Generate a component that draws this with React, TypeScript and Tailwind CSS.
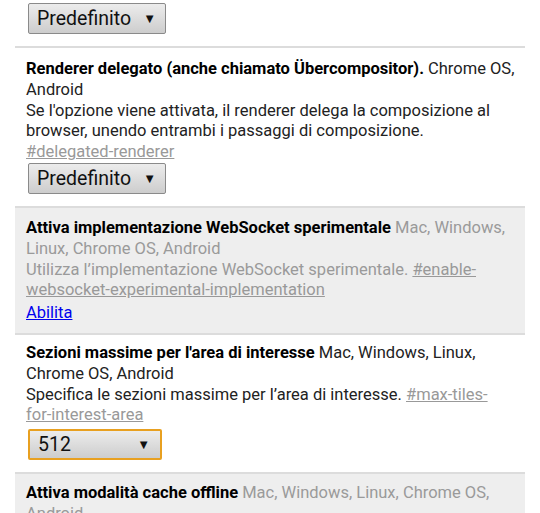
import React from 'react';

const Select = ({ value, width, focused }: { value: string; width: string; focused?: boolean }) => (
  <div
    className={`flex h-[31px] items-center justify-between rounded-[2px] bg-gradient-to-b from-[#ececec] to-[#cdcdcd] pl-[8px] text-[19.5px] leading-none text-[#111] ${width} ${
      focused ? 'border-2 border-[#e8a020] pr-[10px]' : 'border border-[#8a8a8a] pr-[9px]'
    }`}
  >
    <span>{value}</span>
    <span className="text-[13px]">▼</span>
  </div>
);

const Row: React.FC<{ gray?: boolean; className?: string; children: React.ReactNode }> = ({ gray, className, children }) => (
  <div className={`border-t-2 border-[#dcdcdc] pl-[11px] pr-[8px] ${className ?? ''} ${gray ? 'bg-[#eeeeee]' : ''}`}>
    {children}
  </div>
);

export default function App() {
  return (
    <div className="h-[513px] w-[540px] overflow-hidden bg-white font-['Roboto',sans-serif] text-[16.5px] leading-[20.8px] text-[#222]">
      <div className="ml-[15px] w-[510px]">
        {/* tail of previous experiment */}
        <div className="px-[13px] pt-[3px] pb-[12px]">
          <Select value="Predefinito" width="w-[138px]" />
        </div>

        <Row className="pt-[11px] pb-[12px]">
          <div>
            <span className="font-bold text-black">Renderer delegato (anche chiamato Übercompositor).</span> Chrome OS,
            Android
          </div>
          <div>
            Se l'opzione viene attivata, il renderer delega la composizione al browser, unendo entrambi i passaggi di composizione.
            <br />
            <a className="text-[#999] underline">#delegated-renderer</a>
          </div>
          <div className="pl-[2px]">
            <Select value="Predefinito" width="w-[138px]" />
          </div>
        </Row>

        <Row gray className="pt-[10px] pb-[9px]">
          <div className="text-[#9a9a9a]">
            <span className="font-bold text-black">Attiva implementazione WebSocket sperimentale</span> Mac, Windows,
            Linux, Chrome OS, Android
          </div>
          <div className="text-[#9a9a9a]">
            Utilizza l’implementazione WebSocket sperimentale.{' '}
            <a className="text-[#999] underline">#enable-websocket-experimental-implementation</a>
          </div>
          <div className="mt-[2px]">
            <a className="text-[#0000ee] underline">Abilita</a>
          </div>
        </Row>

        <Row className="pt-[8px] pb-[12px]">
          <div>
            <span className="font-bold text-black">Sezioni massime per l'area di interesse</span> Mac, Windows, Linux,
            Chrome OS, Android
          </div>
          <div>
            Specifica le sezioni massime per l’area di interesse.{' '}
            <a className="text-[#999] underline">
              #max-tiles-
              <br />
              for-interest-area
            </a>
          </div>
          <div className="mt-[3px] pl-[2px]">
            <Select value="512" width="w-[134px]" focused />
          </div>
        </Row>

        <Row gray className="pt-[9px] pb-[10px]">
          <div className="text-[#9a9a9a]">
            <span className="font-bold text-black">Attiva modalità cache offline</span> Mac, Windows, Linux, Chrome OS,
            Android
          </div>
          <div className="text-[#9a9a9a]">Consente di utilizzare la modalità cache offline.</div>
        </Row>
      </div>
    </div>
  );
}
